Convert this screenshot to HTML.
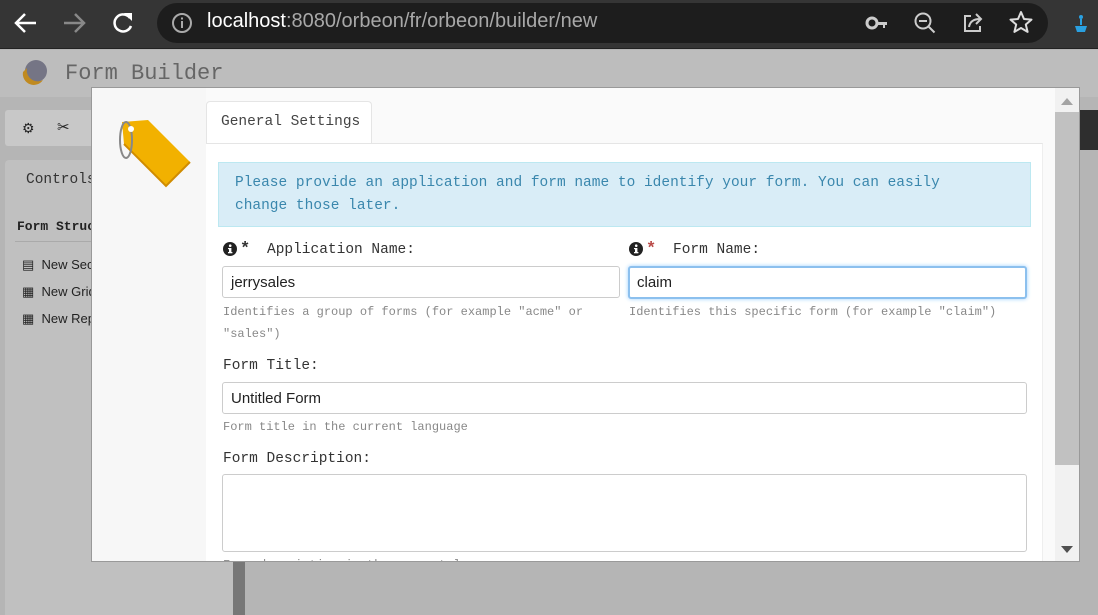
<!DOCTYPE html>
<html><head><meta charset="utf-8"><style>
*{box-sizing:border-box;margin:0;padding:0}
body{width:1098px;height:615px;overflow:hidden;background:#b5b5b5;font-family:"Liberation Sans",sans-serif;position:relative}
.abs{position:absolute}
.mono{font-family:"Liberation Mono",monospace}
.top{left:0;top:0;width:1098px;height:49px;background:#353535;border-bottom:1px solid #222}
.pill{left:157px;top:3px;width:891px;height:40px;border-radius:20px;background:#1d1d1d}
.url{left:207px;top:10px;font-size:20px;color:#fff;white-space:nowrap}
.url span{color:#a8a8a8}
.inp{background:#fff;border:1px solid #ccc;border-radius:3px;font-size:15px;color:#222;padding:7px 8px}
.lbl{font-size:14.5px;color:#333;white-space:nowrap}
.hint{font-size:12px;color:#888;line-height:22px}
</style></head><body>
<div class="abs top"></div>
<svg class="abs" style="left:12px;top:10px" width="28" height="26" viewBox="0 0 28 26"><path d="M24 13H5M13 4l-9 9 9 9" stroke="#fff" stroke-width="2.5" fill="none"/></svg>
<svg class="abs" style="left:60px;top:10px" width="28" height="26" viewBox="0 0 28 26"><path d="M4 13h19M15 4l9 9-9 9" stroke="#888" stroke-width="2.5" fill="none"/></svg>
<svg class="abs" style="left:110px;top:10px" width="26" height="26" viewBox="0 0 26 26"><path d="M20 8A8.5 8.5 0 1 0 21 16" stroke="#fff" stroke-width="2.5" fill="none"/><path d="M14 3h8v8z" fill="#fff"/></svg>
<div class="abs pill"></div>
<svg class="abs" style="left:171px;top:12px" width="22" height="22" viewBox="0 0 22 22"><circle cx="11" cy="11" r="9" stroke="#aaa" stroke-width="2" fill="none"/><rect x="10" y="9" width="2" height="7" fill="#aaa"/><rect x="10" y="5.5" width="2" height="2" fill="#aaa"/></svg>
<div class="abs url">localhost<span>:8080/orbeon/fr/orbeon/builder/new</span></div>
<svg class="abs" style="left:865px;top:13px" width="24" height="20" viewBox="0 0 24 20"><circle cx="7" cy="10" r="5" stroke="#ccc" stroke-width="3" fill="none"/><path d="M12 9h10v3h-2v3h-2v-3h-6z" fill="#ccc"/></svg>
<svg class="abs" style="left:913px;top:11px" width="26" height="24" viewBox="0 0 26 24"><circle cx="10" cy="10" r="7.5" stroke="#ccc" stroke-width="2" fill="none"/><path d="M6 10h8M15.5 15.5l6 6" stroke="#ccc" stroke-width="2"/></svg>
<svg class="abs" style="left:961px;top:11px" width="24" height="24" viewBox="0 0 24 24"><path d="M10 5H4v15h15v-5" stroke="#ccc" stroke-width="2" fill="none"/><path d="M8 16c1-6 5-8 11-8M15 3l5 5-5 5" stroke="#ccc" stroke-width="2" fill="none"/></svg>
<svg class="abs" style="left:1009px;top:10px" width="24" height="24" viewBox="0 0 24 24"><path d="M12 2l3 7 7.5.6-5.7 4.9 1.8 7.4L12 18l-6.6 3.9 1.8-7.4L1.5 9.6 9 9z" stroke="#ddd" stroke-width="2" fill="none" stroke-linejoin="round"/></svg>
<svg class="abs" style="left:1073px;top:12px" width="16" height="24" viewBox="0 0 16 24"><circle cx="8" cy="5" r="2" fill="#2aa0e0"/><path d="M7 7h2v6H7z" fill="#2aa0e0"/><path d="M2 14h12l-2 6H4z" fill="#2aa0e0"/></svg>

<div class="abs" style="left:0;top:50px;width:1098px;height:47px;background:#bdbdbd"></div>
<svg class="abs" style="left:20px;top:58px" width="30" height="32" viewBox="0 0 30 32"><circle cx="16" cy="13" r="11" fill="#757585"/><path d="M3 14a11 11 0 0 0 20 8 11 11 0 0 1-16-12z" fill="#c08a20"/></svg>
<div class="abs mono" style="left:65px;top:61px;font-size:22px;color:#666">Form Builder</div>

<div class="abs" style="left:5px;top:110px;width:228px;height:36px;background:#c8c8c8;border-radius:3px"></div>
<div class="abs" style="left:22px;top:120px;font-size:14px;color:#222">⚙</div>
<div class="abs" style="left:57px;top:118px;font-size:15px;color:#222">✂</div>
<div class="abs" style="left:5px;top:160px;width:228px;height:455px;background:#c0c0c0;border-radius:4px 4px 0 0"></div>
<div class="abs mono" style="left:26px;top:172px;font-size:14.5px;color:#333">Controls</div>
<div class="abs mono" style="left:17px;top:219px;font-size:13px;font-weight:bold;color:#222">Form Structure</div>
<div class="abs" style="left:15px;top:241px;width:220px;height:1px;background:#aaa"></div>
<div class="abs" style="left:22px;top:251px;font-size:13px;color:#222;line-height:27px">▤&nbsp; New Section<br>▦&nbsp; New Grid<br>▦&nbsp; New Repeat</div>
<div class="abs" style="left:233px;top:560px;width:12px;height:55px;background:#777"></div>
<div class="abs" style="left:1080px;top:110px;width:18px;height:40px;background:#2e2e2e"></div>

<div class="abs" style="left:91px;top:87px;width:989px;height:475px;background:#fff;border:1px solid #999;overflow:hidden">
  <div class="abs" style="left:0;top:0;width:114px;height:475px;background:#f7f7f7"></div>
  <svg class="abs" style="left:24px;top:24px" width="80" height="78" viewBox="0 0 80 78"><path d="M6 10l26-2 42 42-24 24L8 32z" fill="#f2b100"/><path d="M8 32l42 42 24-24" stroke="#d08c00" stroke-width="2" fill="none"/><ellipse cx="10" cy="28" rx="6" ry="18" stroke="#888" stroke-width="2" fill="none"/><circle cx="15" cy="17" r="3" fill="#fff"/></svg>
  <div class="abs" style="left:114px;top:0;width:850px;height:475px;background:#fafafa"></div>
  <div class="abs mono" style="left:114px;top:13px;width:166px;height:44px;background:#fff;border:1px solid #e5e5e5;border-bottom:none;border-radius:4px 4px 0 0;font-size:14.5px;color:#444;padding:12px 14px;white-space:nowrap">General Settings</div>
  <div class="abs" style="left:114px;top:55px;width:837px;height:430px;background:#fff;border-top:1px solid #e5e5e5;border-right:1px solid #eee"></div>
  <div class="abs mono" style="left:126px;top:74px;width:813px;height:65px;background:#d9edf7;border:1px solid #bce8f1;color:#3a87ad;font-size:14.5px;line-height:23px;padding:9px 60px 9px 16px">Please provide an application and form name to identify your form. You can easily change those later.</div>
  <svg class="abs" style="left:131px;top:154px" width="14" height="14" viewBox="0 0 14 14"><circle cx="7" cy="7" r="7" fill="#222"/><rect x="6" y="6" width="2.4" height="5" fill="#fff"/><rect x="5" y="10" width="4.4" height="1.3" fill="#fff"/><rect x="5" y="6" width="2" height="1.2" fill="#fff"/><circle cx="7.2" cy="3.7" r="1.3" fill="#fff"/></svg>
  <div class="abs mono lbl" style="left:148px;top:153px;font-size:17px;line-height:18px;font-weight:bold">*</div>
  <div class="abs mono lbl" style="left:175px;top:154px">Application Name:</div>
  <svg class="abs" style="left:537px;top:154px" width="14" height="14" viewBox="0 0 14 14"><circle cx="7" cy="7" r="7" fill="#222"/><rect x="6" y="6" width="2.4" height="5" fill="#fff"/><rect x="5" y="10" width="4.4" height="1.3" fill="#fff"/><rect x="5" y="6" width="2" height="1.2" fill="#fff"/><circle cx="7.2" cy="3.7" r="1.3" fill="#fff"/></svg>
  <div class="abs mono lbl" style="left:554px;top:153px;font-size:17px;line-height:18px;font-weight:bold;color:#b94a48">*</div>
  <div class="abs mono lbl" style="left:581px;top:154px">Form Name:</div>
  <div class="abs inp" style="left:130px;top:178px;width:398px;height:32px">jerrysales</div>
  <div class="abs inp" style="left:536px;top:178px;width:399px;height:33px;border:2px solid #8cc0ee;box-shadow:0 0 4px #9cd0ff;padding:6px 7px">claim</div>
  <div class="abs mono hint" style="left:131px;top:213px;width:380px">Identifies a group of forms (for example "acme" or "sales")</div>
  <div class="abs mono hint" style="left:537px;top:213px">Identifies this specific form (for example "claim")</div>
  <div class="abs mono lbl" style="left:131px;top:270px">Form Title:</div>
  <div class="abs inp" style="left:130px;top:294px;width:805px;height:32px">Untitled Form</div>
  <div class="abs mono hint" style="left:131px;top:328px">Form title in the current language</div>
  <div class="abs mono lbl" style="left:131px;top:363px">Form Description:</div>
  <div class="abs inp" style="left:130px;top:386px;width:805px;height:78px"></div>
  <div class="abs mono hint" style="left:131px;top:466px">Form description in the current language</div>
  <div class="abs" style="left:963px;top:0;width:25px;height:475px;background:#f1f1f1"></div>
  <div class="abs" style="left:963px;top:24px;width:24px;height:353px;background:#c1c1c1"></div>
  <div class="abs" style="left:969px;top:10px;width:0;height:0;border-left:6px solid transparent;border-right:6px solid transparent;border-bottom:7px solid #a3a3a3"></div>
  <div class="abs" style="left:969px;top:458px;width:0;height:0;border-left:6px solid transparent;border-right:6px solid transparent;border-top:7px solid #505050"></div>
</div>
</body></html>
